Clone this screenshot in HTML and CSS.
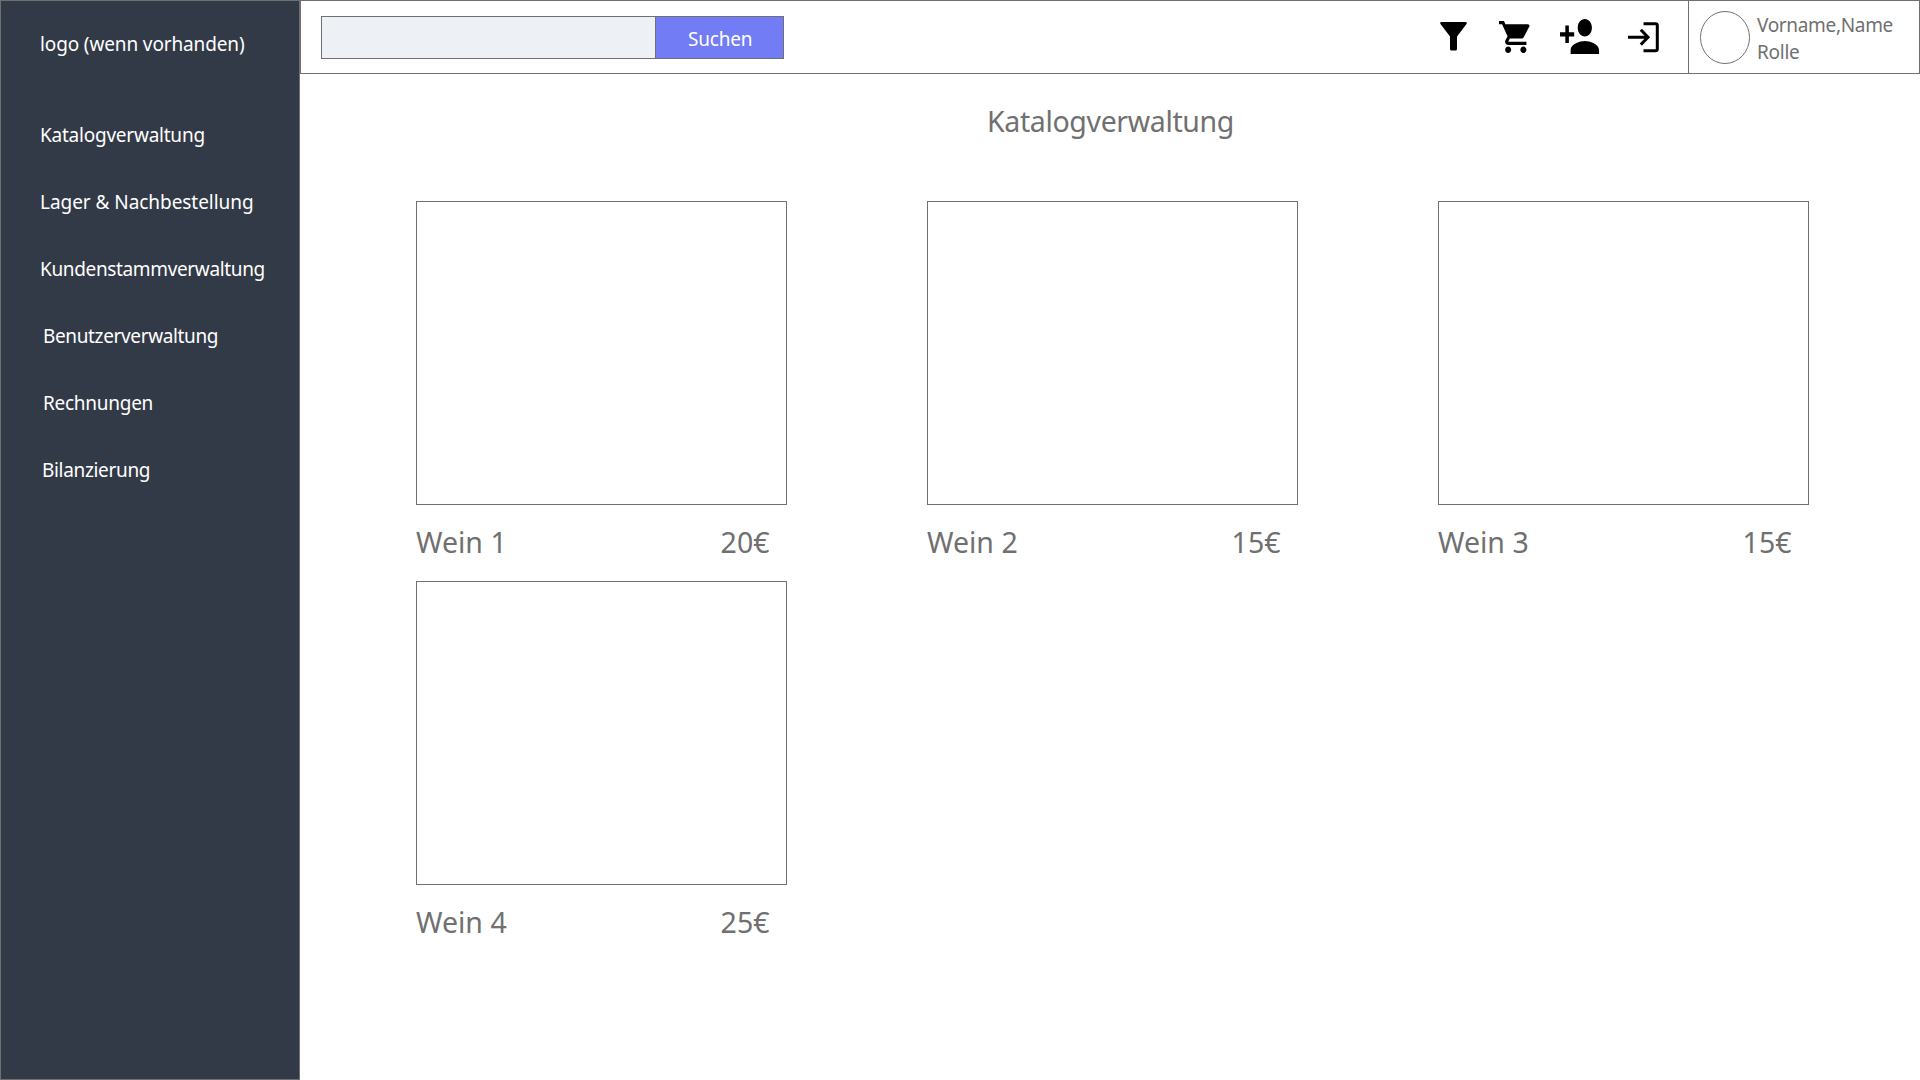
FILE: index.html
```
<!DOCTYPE html>
<html lang="de">
<head>
<meta charset="utf-8">
<title>Katalogverwaltung</title>
<link rel="stylesheet" href="styles.css">
</head>
<body>
<div class="app">
  <aside class="sidebar">
    <div class="logo">logo (wenn vorhanden)</div>
    <nav class="nav">
      <a class="nav-item katalog">Katalogverwaltung</a>
      <a class="nav-item lager">Lager &amp; Nachbestellung</a>
      <a class="nav-item kunden">Kundenstammverwaltung</a>
      <a class="nav-item benutzer">Benutzerverwaltung</a>
      <a class="nav-item rechnungen">Rechnungen</a>
      <a class="nav-item bilanz">Bilanzierung</a>
    </nav>
  </aside>
  <div class="main">
    <header class="header">
      <div class="search">
        <div class="search-field"></div>
        <div class="search-button">Suchen</div>
      </div>
      <div class="actions">
        <svg class="icon-filter" viewBox="0 0 27 29"><path d="M1.5 0H25.5Q27.500 .3 26.500 2L17 14.500V27Q17 28.500 15.500 28.500H11.500Q10 28.500 10 27V14.500L.5 2Q-.5 .3 1.500 0Z"/></svg>
        <svg class="icon-cart" viewBox="1 2 21 20" preserveAspectRatio="none"><path d="M7 18c-1.1 0-1.99.9-1.99 2S5.9 22 7 22s2-.9 2-2-.9-2-2-2zM1 2v2h2l3.6 7.590-1.350 2.450c-.16.28-.25.61-.25.96 0 1.100.9 2 2 2h12v-2H7.420c-.14 0-.25-.11-.25-.25l.03-.12.9-1.630h7.450c.75 0 1.410-.41 1.750-1.030l3.580-6.490c.08-.14.12-.31.12-.48 0-.55-.45-1-1-1H5.210l-.94-2H1zm16 16c-1.100 0-1.990.9-1.990 2s.89 2 1.990 2 2-.9 2-2-.9-2-2-2z"/></svg>
        <svg class="icon-person" viewBox="1 4 22 16" preserveAspectRatio="none"><path d="M15 12c2.210 0 4-1.790 4-4s-1.790-4-4-4-4 1.790-4 4 1.790 4 4 4zm-9-2V7H4v3H1v2h3v3h2v-3h3v-2H6zm9 4c-2.670 0-8 1.340-8 4v2h16v-2c0-2.660-5.330-4-8-4z"/></svg>
        <svg class="icon-login" viewBox="0 0 31 31"><path class="line" d="M15.500 1.700H27.500Q29.300 1.700 29.300 3.500V27Q29.300 28.800 27.500 28.800H15.500M0 15.200H20M12.800 7.800L20 15.200L12.800 22.600"/></svg>
      </div>
      <div class="profile">
        <svg class="avatar" viewBox="0 0 50 53"><ellipse cx="25" cy="26.500" rx="24.500" ry="26"/></svg>
        <div class="profile-text">
          <div class="profile-name">Vorname,Name</div>
          <div class="profile-role">Rolle</div>
        </div>
      </div>
    </header>
    <main class="content">
      <h1 class="title">Katalogverwaltung</h1>
      <div class="grid">
        <article class="card"><div class="picture"></div><div class="caption"><span>Wein 1</span><span>20€</span></div></article>
        <article class="card"><div class="picture"></div><div class="caption"><span>Wein 2</span><span>15€</span></div></article>
        <article class="card"><div class="picture"></div><div class="caption"><span>Wein 3</span><span>15€</span></div></article>
        <article class="card"><div class="picture"></div><div class="caption"><span>Wein 4</span><span>25€</span></div></article>
      </div>
    </main>
  </div>
</div>
</body>
</html>
```
FILE: styles.css
```
* { box-sizing: border-box; }
body {
  margin: 0;
  background: #fff;
  color: #707070;
  font-family: "Segoe UI", "Noto Sans", sans-serif;
  font-size: 19px;
}
.app { display: flex; width: 1920px; height: 1080px; overflow: hidden; }

.sidebar {
  width: 300px;
  padding: 28px 0 0 39px;
  border: 1px solid #707070;
  background: #333a47;
  color: #fff;
  line-height: 30px;
  white-space: nowrap;
}
.logo { letter-spacing: -0.13px; }
.nav { display: flex; flex-direction: column; gap: 37px; margin-top: 61px; }
.katalog { letter-spacing: -0.23px; }
.lager { letter-spacing: -0.05px; }
.kunden { letter-spacing: -0.35px; }
.benutzer { padding-left: 3px; letter-spacing: -0.36px; }
.rechnungen { padding-left: 3px; letter-spacing: -0.27px; }
.bilanz { padding-left: 2px; letter-spacing: -0.33px; }

.main { flex: 1; display: flex; flex-direction: column; }
.header {
  display: flex;
  height: 74px;
  border: 1px solid #707070;
}
.search { display: flex; width: 463px; height: 43px; margin: 15px 0 0 20px; border: 1px solid #707070; }
.search-field { flex: 1; background: #edf1f6; }
.search-button {
  width: 128px;
  padding: 7px 0 0 32px;
  border-left: 1px solid #707070;
  background: #727cf5;
  color: #fff;
  line-height: 30px;
  letter-spacing: -0.2px;
}
.actions { display: flex; align-items: flex-start; margin-left: auto; padding: 18px 29px 0 0; }
.actions svg { display: block; fill: #000; }
.icon-filter { width: 27px; height: 29px; margin: 3px 32px 0 0; }
.icon-cart { width: 32px; height: 32px; margin: 2px 29px 0 0; }
.icon-person { width: 39px; height: 35px; margin-right: 29px; }
.icon-login { width: 31px; height: 31px; margin-top: 3px; }
.icon-login .line { fill: none; stroke: #000; stroke-width: 3; }

.profile { display: flex; width: 231px; padding: 10px 0 0 11px; border-left: 1px solid #707070; }
.avatar { width: 50px; height: 53px; fill: #fff; stroke: #707070; }
.profile-text { margin: 1px 0 0 7px; line-height: 27px; }
.profile-name { letter-spacing: -0.33px; }
.profile-role { letter-spacing: -0.25px; }

.content { font-size: 28.5px; }
.title {
  margin: 27px 0 0 687px;
  font-size: inherit;
  font-weight: 400;
  line-height: 40px;
  letter-spacing: -0.36px;
}
.grid {
  display: grid;
  grid-template-columns: repeat(3, 371px);
  grid-auto-rows: 380px;
  column-gap: 140px;
  margin: 60px 0 0 116px;
}
.picture { height: 304px; border: 1px solid #707070; }
.caption { display: flex; justify-content: space-between; padding: 17px 17.5px 0 0; line-height: 40px; }
```
